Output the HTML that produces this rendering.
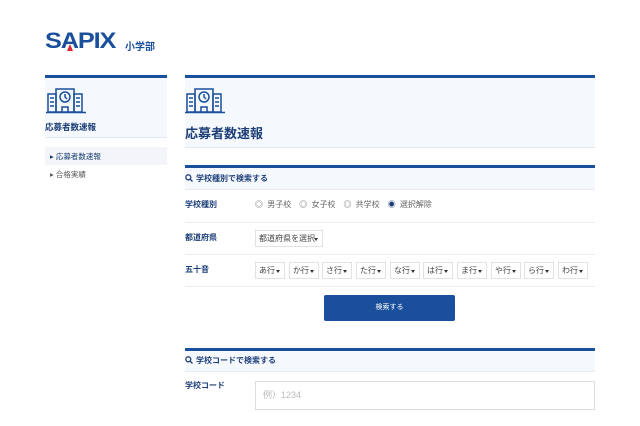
<!DOCTYPE html><html><head><meta charset="utf-8"><style>
*{margin:0;padding:0;box-sizing:border-box}
body{width:640px;height:426px;overflow:hidden;background:#fff;font-family:"Liberation Sans","Noto Sans CJK JP",sans-serif;position:relative;color:#333}
.a{position:absolute}
.bl{color:#1d3f78;font-weight:bold}
.sel{position:absolute;height:17px;border:1px solid #e2e2e2;background:#fff;font-size:8px;line-height:15px;padding-left:3px;color:#444}
.sel:after{content:"";position:absolute;right:4px;top:7px;border:2.5px solid transparent;border-top:3px solid #333}
.line{position:absolute;left:185px;width:410px;height:1px;background:#e8ecf2}
.mg{display:inline-block;vertical-align:-1px;margin-right:3px}
</style></head><body>
<div class="a" style="left:45px;top:30px;font:900 22px/22px 'Liberation Sans',sans-serif;color:#1a4f9c;letter-spacing:-1px;transform:scaleX(1.15);transform-origin:left">SAPIX</div>
<div class="a" style="left:67px;top:44px;width:0;height:0;border-left:3px solid transparent;border-right:3px solid transparent;border-bottom:7px solid #e0262d"></div>
<div class="a bl" style="left:125px;top:38px;font-size:10px;color:#1a4f9c">小学部</div>

<div class="a" style="left:45px;top:75px;width:122px;height:3px;background:#1a4f9c"></div>
<div class="a" style="left:45px;top:78px;width:122px;height:60px;background:#f5f8fc;border-bottom:1px solid #e3e8ef"></div>
<svg class="a" style="left:46px;top:86px" width="40" height="28" viewBox="0 0 40 28" fill="none" stroke="#1a4f9c" stroke-width="1.5"><rect x="2" y="8" width="8" height="18"/><rect x="28" y="8" width="8" height="18"/><rect x="10" y="3" width="18" height="23"/><circle cx="19" cy="11" r="5"/><path d="M19 8v3l2 2M16 26v-5h6v5M0 26.5h40M4 12h4M4 16h4M4 20h4M30 12h4M30 16h4M30 20h4"/></svg>
<div class="a bl" style="left:45px;top:121px;font-size:8.5px">応募者数速報</div>
<div class="a" style="left:45px;top:147px;width:122px;height:18px;background:#f3f5f8"></div>
<div class="a" style="left:50px;top:151px;font-size:7.5px;color:#1d3f78">▸ 応募者数速報</div>
<div class="a" style="left:50px;top:169px;font-size:7.5px;color:#555">▸ 合格実績</div>

<div class="a" style="left:185px;top:75px;width:410px;height:3px;background:#1a4f9c"></div>
<div class="a" style="left:185px;top:78px;width:410px;height:70px;background:#f5f8fc;border-bottom:1px solid #e3e8ef"></div>
<svg class="a" style="left:185px;top:86px" width="40" height="28" viewBox="0 0 40 28" fill="none" stroke="#1a4f9c" stroke-width="1.5"><rect x="2" y="8" width="8" height="18"/><rect x="28" y="8" width="8" height="18"/><rect x="10" y="3" width="18" height="23"/><circle cx="19" cy="11" r="5"/><path d="M19 8v3l2 2M16 26v-5h6v5M0 26.5h40M4 12h4M4 16h4M4 20h4M30 12h4M30 16h4M30 20h4"/></svg>
<div class="a bl" style="left:185px;top:123px;font-size:13px">応募者数速報</div>

<div class="a" style="left:185px;top:165px;width:410px;height:3px;background:#1a4f9c"></div>
<div class="a" style="left:185px;top:168px;width:410px;height:22px;background:#f5f8fc;border-bottom:1px solid #e8ecf2"></div>
<div class="a bl" style="left:185px;top:173px;font-size:8px"><svg class="mg" width="8" height="8" viewBox="0 0 8 8" fill="none" stroke="#1d3f78" stroke-width="1.3"><circle cx="3.3" cy="3.3" r="2.5"/><path d="M5.2 5.2L7.5 7.5"/></svg>学校種別で検索する</div>
<div class="a bl" style="left:185px;top:199px;font-size:8px">学校種別</div>
<div class="a" style="left:255px;top:199px;font-size:8px;color:#666;word-spacing:2px">◎ 男子校　◎ 女子校　◎ 共学校　<span style="color:#1d3f78">◉</span> 選択解除</div>
<div class="line" style="top:222px"></div>
<div class="a bl" style="left:185px;top:232px;font-size:8px">都道府県</div>
<div class="sel" style="left:255px;top:230px;width:68px">都道府県を選択</div>
<div class="line" style="top:254px"></div>
<div class="a bl" style="left:185px;top:264px;font-size:8px">五十音</div>
<div class="sel" style="left:255px;top:262px;width:30px">あ行</div>
<div class="sel" style="left:289px;top:262px;width:30px">か行</div>
<div class="sel" style="left:322px;top:262px;width:30px">さ行</div>
<div class="sel" style="left:356px;top:262px;width:30px">た行</div>
<div class="sel" style="left:390px;top:262px;width:30px">な行</div>
<div class="sel" style="left:423px;top:262px;width:30px">は行</div>
<div class="sel" style="left:457px;top:262px;width:30px">ま行</div>
<div class="sel" style="left:491px;top:262px;width:30px">や行</div>
<div class="sel" style="left:524px;top:262px;width:30px">ら行</div>
<div class="sel" style="left:558px;top:262px;width:30px">わ行</div>
<div class="line" style="top:286px"></div>
<div class="a" style="left:324px;top:295px;width:131px;height:26px;background:#1a4f9c;border-radius:2px;color:#fff;font-size:7px;text-align:center;line-height:26px">検索する</div>

<div class="a" style="left:185px;top:348px;width:410px;height:3px;background:#1a4f9c"></div>
<div class="a" style="left:185px;top:351px;width:410px;height:21px;background:#f5f8fc;border-bottom:1px solid #e8ecf2"></div>
<div class="a bl" style="left:185px;top:355px;font-size:8px"><svg class="mg" width="8" height="8" viewBox="0 0 8 8" fill="none" stroke="#1d3f78" stroke-width="1.3"><circle cx="3.3" cy="3.3" r="2.5"/><path d="M5.2 5.2L7.5 7.5"/></svg>学校コードで検索する</div>
<div class="a bl" style="left:185px;top:380px;font-size:8px">学校コード</div>
<div class="a" style="left:255px;top:381px;width:340px;height:29px;border:1px solid #ddd;font-size:9px;color:#bbb;line-height:27px;padding-left:7px">例）1234</div>
</body></html>
